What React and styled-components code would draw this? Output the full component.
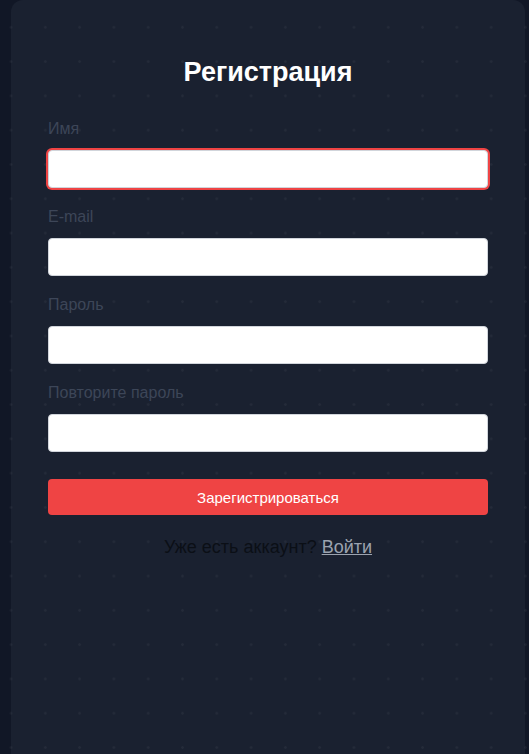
import { createGlobalStyle, styled } from "styled-components";

const dots = `radial-gradient(circle, rgba(255, 255, 255, 0.045) 1.1px, transparent 1.6px)`;

const GlobalStyle = createGlobalStyle`
  * {
    box-sizing: border-box;
  }

  body {
    margin: 0;
    min-height: 100vh;
    font-family: "Liberation Sans", Arial, sans-serif;
    background-color: #111726;
    background-image: ${dots};
    background-size: 34.3px 34.3px;
    background-position: -6.15px 10.15px;
    background-attachment: fixed;
  }
`;

const Page = styled.main`
  padding-left: 11px;
  min-height: 100vh;
`;

const Card = styled.section`
  width: 514px;
  min-height: 100vh;
  padding: 56px 37px 40px;
  border-radius: 12px 12px 0 0;
  background-color: #1a2130;
  background-image: ${dots};
  background-size: 34.3px 34.3px;
  background-position: -6.15px 10.15px;
  background-attachment: fixed;
`;

const Title = styled.h1`
  margin: 0 0 31px;
  font-size: 27px;
  line-height: 32px;
  font-weight: 700;
  color: #ffffff;
  text-align: center;
`;

const Form = styled.form`
  display: flex;
  flex-direction: column;
`;

const Field = styled.div`
  display: flex;
  flex-direction: column;
  margin-bottom: 19px;
`;

const Label = styled.label`
  font-size: 16px;
  line-height: 20px;
  color: #3d4658;
  margin-bottom: 11px;
`;

const Input = styled.input`
  height: 38px;
  width: 100%;
  padding: 0 14px;
  border: 1px solid #d1d5db;
  border-radius: 4px;
  background: #ffffff;
  font-family: inherit;
  font-size: 16px;
  color: #111;
  caret-color: #000;
  outline: none;

  &:focus {
    box-shadow: 0 0 0 2px #ef4444;
  }
`;

const SubmitButton = styled.button`
  height: 36px;
  margin-top: 8px;
  border: none;
  border-radius: 4px;
  background: #ef4444;
  color: #ffffff;
  font-family: inherit;
  font-size: 15px;
  cursor: pointer;
`;

const Footer = styled.p`
  margin: 20px 0 0;
  text-align: center;
  font-size: 18px;
  line-height: 24px;
  color: #0b0f16;

  a {
    color: #9ca3af;
    text-decoration: underline;
  }
`;

const fields = [
  { id: "name", label: "Имя", type: "text" },
  { id: "email", label: "E-mail", type: "email" },
  { id: "password", label: "Пароль", type: "password" },
  { id: "repeat", label: "Повторите пароль", type: "password" },
];

export default function App() {
  return (
    <>
      <GlobalStyle />
      <Page>
        <Card>
          <Title>Регистрация</Title>
          <Form onSubmit={(e) => e.preventDefault()}>
            {fields.map((field, i) => (
              <Field key={field.id}>
                <Label htmlFor={field.id}>{field.label}</Label>
                <Input id={field.id} type={field.type} autoFocus={i === 0} />
              </Field>
            ))}
            <SubmitButton type="submit">Зарегистрироваться</SubmitButton>
          </Form>
          <Footer>
            Уже есть аккаунт? <a href="#login">Войти</a>
          </Footer>
        </Card>
      </Page>
    </>
  );
}
